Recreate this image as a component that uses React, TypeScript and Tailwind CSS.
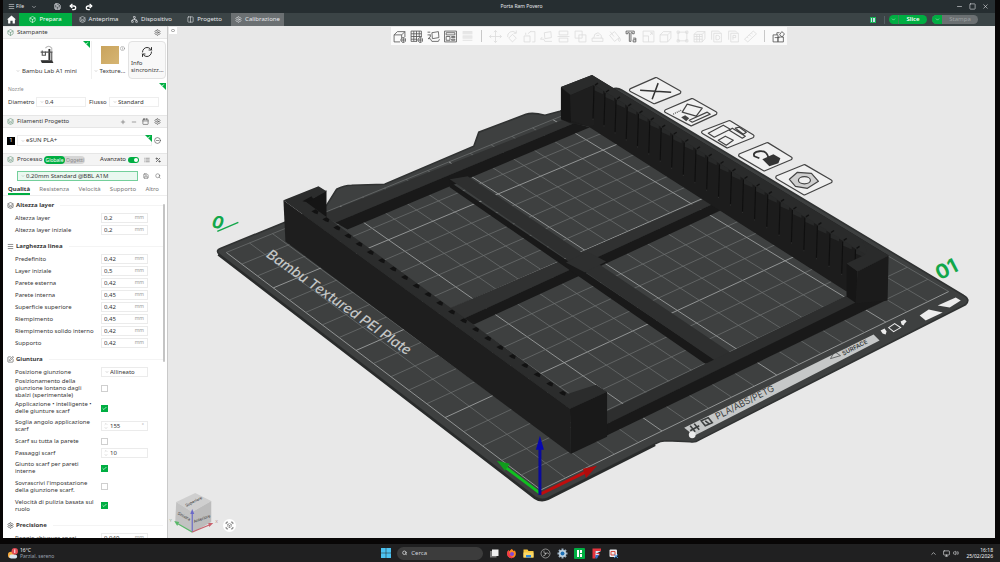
import type { ReactNode } from "react";
import {
  Box,
  Calendar,
  Check,
  ChevronDown,
  ChevronUp,
  CircleMinus,
  Columns2,
  Info,
  Layers,
  List,
  Menu,
  Minus,
  Monitor,
  Network,
  Percent,
  Plus,
  Redo2,
  RefreshCw,
  Save,
  Scan,
  Search,
  Settings,
  SquarePen,
  Square,
  Undo2,
  Volume2,
  X,
} from "lucide-react";

type Point = [number, number];

const tabs = [
  { label: "Prepara", icon: Box, style: "bg-[#00ae42] text-white" },
  { label: "Anteprima", icon: Layers, style: "text-gray-200" },
  { label: "Dispositivo", icon: Network, style: "text-gray-200" },
  { label: "Progetto", icon: Columns2, style: "text-gray-200" },
  { label: "Calibrazione", icon: Settings, style: "bg-[#6b7072] text-gray-200" },
];

// 24x24 outlines for the tools above the plate
const tools = [
  { name: "Aggiungi", on: true, d: "M2 9l6-6h14l-6 6H2v13h11M16 9v6M22 3v10M19 14v9M14.500 18.500h9M19 14a4.500 4.500 0 1 0 .1 0" },
  { name: "Aggiungi piatto", on: true, d: "M2 2h19v11M2 2v19h11M2 7h19M2 12h19M2 17h11M7 2v19M12 2v19M17 2v11M19 14v9M14.500 18.500h9M19 14a4.500 4.500 0 1 0 .1 0" },
  { name: "Orienta", on: true, d: "M9 5l12-2 1 11-12 2zM1 4h5M1 9h6M6 9v4l-4 3M2 16h4l3 5h12l2-4" },
  { name: "Disponi", on: true, d: "M1 2h22v20H1zM4 5h16v4H4zM4 12h7v7H4zM14 12h6v2h-6zM14 17h6v2h-6z" },
  { name: "Layer", on: false, d: "M3 3h18M3 7h18M3 11h18M3 15h18M3 19h18M3 5h18M3 13h18" },
  { name: "Sposta", on: false, d: "M12 1v22M1 12h22M9 4l3-3 3 3M9 20l3 3 3-3M4 9l-3 3 3 3M20 9l3 3-3 3" },
  { name: "Ruota", on: false, d: "M3 13a9 9 0 0 1 15-8M19 1v5h-5M12 8l7 7-7 7-7-7z" },
  { name: "Scala", on: false, d: "M2 11h11v11H2zM13 3h9v19h-5M9 7l6-5M5 5v4" },
  { name: "Faccia", on: false, d: "M8 5l12-2 1 11-12 2zM1 17h6l2 4h13M4 13l-3 4" },
  { name: "Taglia", on: false, d: "M4 2h16v7H4zM4 15h16v7H4zM1 12h22" },
  { name: "Booleana", on: false, d: "M2 2h13v13H2zM9 9h13v13H9z" },
  { name: "Supporti", on: false, d: "M2 21h20v-6H2zM5 15l2-7 6-3 6 5v5M10 10h5" },
  { name: "Colore", on: false, d: "M3 10l9-7 9 11-9 7zM4 3l7 9M21 14c3 4 2 7 0 7s-2-3 0-7" },
  { name: "Testo", on: true, d: "M2 2h15v5h-3V5h-3v16H8V5H5v2H2zM15 15h5v7h-5v-4h5" },
  { name: "Variabile", on: false, d: "M2 2h20v20H2zM2 11h10v11M15 5h4v4M15 9l4-4" },
  { name: "Assembla", on: false, d: "M2 9l6-6h14l-6 6H2v13h14V9M22 3v12l-6 7" },
  { name: "Maglia", on: false, d: "M4 4h16v16H4zM2 2h4v4H2zM18 2h4v4h-4zM2 18h4v4H2zM18 18h4v4h-4z" },
  { name: "Riempi", on: false, d: "M2 8l5-5h15l-5 5H2v14h15V8M22 3v13l-5 6M2 12h15M2 17h15M7 8v14M12 8v14" },
  { name: "Oggetto", on: false, d: "M3 2h13l3 3M3 2v16M7 6h14v16H7zM11 10h3a4 4 0 0 1 0 8h-3z" },
  { name: "Parte", on: false, d: "M3 2h13l3 3M3 2v16M7 6h14v16H7zM11 18v-8h5v4h-5" },
  { name: "Misura", on: false, d: "M1 17L17 2l6 5L7 22zM6 13l2 2M10 9l3 3M14 6l2 2" },
  { name: "Assieme", on: true, d: "M2 9h9v13H2zM11 13h10v9H11zM9 9V5h5M14 9l4-6 5 4-4 6zM5 14h9" },
];

type Setting = {
  label: string;
  height: string;
  kind: "text" | "select" | "check" | "spin";
  value?: string;
  unit?: string;
  checked?: boolean;
};

const sections: { title: string; icon: typeof Box; rows: Setting[] }[] = [
  {
    title: "Altezza layer",
    icon: Layers,
    rows: [
      { label: "Altezza layer", height: "h-3", kind: "text", value: "0,2", unit: "mm" },
      { label: "Altezza layer iniziale", height: "h-3", kind: "text", value: "0,2", unit: "mm" },
    ],
  },
  {
    title: "Larghezza linea",
    icon: Menu,
    rows: [
      { label: "Predefinito", height: "h-3", kind: "text", value: "0,42", unit: "mm" },
      { label: "Layer iniziale", height: "h-3", kind: "text", value: "0,5", unit: "mm" },
      { label: "Parete esterna", height: "h-3", kind: "text", value: "0,42", unit: "mm" },
      { label: "Parete interna", height: "h-3", kind: "text", value: "0,45", unit: "mm" },
      { label: "Superficie superiore", height: "h-3", kind: "text", value: "0,42", unit: "mm" },
      { label: "Riempimento", height: "h-3", kind: "text", value: "0,45", unit: "mm" },
      { label: "Riempimento solido interno", height: "h-3", kind: "text", value: "0,42", unit: "mm" },
      { label: "Supporto", height: "h-3", kind: "text", value: "0,42", unit: "mm" },
    ],
  },
  {
    title: "Giuntura",
    icon: SquarePen,
    rows: [
      { label: "Posizione giunzione", height: "h-3", kind: "select", value: "Allineato" },
      { label: "Posizionamento della giunzione lontano dagli sbalzi (sperimentale)", height: "h-[21px]", kind: "check" },
      { label: "Applicazione • intelligente • delle giunture scarf", height: "h-[18px]", kind: "check", checked: true },
      { label: "Soglia angolo applicazione scarf", height: "h-[18px]", kind: "spin", value: "155", unit: "°" },
      { label: "Scarf su tutta la parete", height: "h-3", kind: "check" },
      { label: "Passaggi scarf", height: "h-3", kind: "spin", value: "10" },
      { label: "Giunto scarf per pareti interne", height: "h-[18px]", kind: "check", checked: true },
      { label: "Sovrascrivi l'impostazione della giunzione scarf.", height: "h-[19px]", kind: "check" },
      { label: "Velocità di pulizia basata sul ruolo", height: "h-[19px]", kind: "check", checked: true },
    ],
  },
  {
    title: "Precisione",
    icon: Settings,
    rows: [{ label: "Raggio chiusura spazi", height: "h-3", kind: "text", value: "0,049", unit: "mm" }],
  },
];

// Maps the unit square onto the four grid corners of the plate
const makeProjection = ([p0, p1, p2, p3]: Point[]) => {
  const [x0, y0] = p0;
  const [x1, y1] = p1;
  const [x2, y2] = p2;
  const [x3, y3] = p3;
  const dx1 = x1 - x2, dx2 = x3 - x2, dx3 = x0 - x1 + x2 - x3;
  const dy1 = y1 - y2, dy2 = y3 - y2, dy3 = y0 - y1 + y2 - y3;
  const den = dx1 * dy2 - dx2 * dy1;
  const g = (dx3 * dy2 - dx2 * dy3) / den;
  const h = (dx1 * dy3 - dx3 * dy1) / den;
  return (u: number, v: number): Point => {
    const w = g * u + h * v + 1;
    return [
      ((x1 - x0 + g * x1) * u + (x3 - x0 + h * x3) * v + x0) / w,
      ((y1 - y0 + g * y1) * u + (y3 - y0 + h * y3) * v + y0) / w,
    ];
  };
};

const project = makeProjection([[541, 490], [948, 292], [613, 96], [227, 253]]);
const CELLS = 18;

const PlateGrid = () => (
  <g>
    {Array.from({ length: CELLS + 1 }, (_, i) => {
      const t = i / CELLS;
      const bold = i % 5 === 0;
      const lines = [
        [project(t, 0), project(t, 1)],
        [project(0, t), project(1, t)],
      ];
      return lines.map(([a, b], k) => (
        <line key={`${i}-${k}`} x1={a[0]} y1={a[1]} x2={b[0]} y2={b[1]} stroke={bold ? "#9b9d9d" : "#707373"} strokeWidth={bold ? 0.9 : 0.7} />
      ));
    })}
  </g>
);

const FRONT_NOTCHES = 22;
const BACK_NOTCHES = 23;

const ease = (i: number, n: number) => {
  const t = i / (n - 1);
  return t * (0.92 + 0.08 * t);
};

const Model = () => (
  <g>
    {/* rear and cross bars */}
    <polygon points="320,216 567,119 574,124 336,223" fill="#303131" />
    <polygon points="336,223 574,124 590,128 348,230" fill="#191919" />
    <polygon points="447,310 713,196 723,200 462,320" fill="#303131" />
    <polygon points="462,320 723,200 723,210 474,325" fill="#191919" />
    <polygon points="449,178 452,184 718,362 705,364 450,188" fill="#191919" />
    <polygon points="450,180 468,177 732,354 718,363" fill="#2e2f2f" />
    <polygon points="566,263 587,252 606,262 585,273" fill="#2e2f2f" />

    {/* slotted rear wall */}
    <polygon points="561,88 592,76 888,256 857,272 846,292 588,127 570,124 561,120" fill="#1c1c1c" />
    <polygon points="561,88 592,76 888,256 868,262 856,250 594,86 571,96" fill="#2a2b2b" />
    <polygon points="570,96 594,86 594,126 588,127 570,121" fill="#1e1e1e" />
    <polygon points="561,89 570,96 571,123 561,120" fill="#151515" />
    {Array.from({ length: BACK_NOTCHES }, (_, i) => {
      const t = ease(i, BACK_NOTCHES);
      const x = 594 + t * 261;
      const y = 87 + t * 163;
      return (
        <g key={i}>
          <polygon points={`${x},${y - 1} ${x + 9},${y + 4} ${x + 9},${y + 8} ${x},${y + 4}`} fill="#282929" />
          <line x1={x + 1} y1={y - 1} x2={x + 4} y2={y - 3} stroke="#121212" strokeWidth="1.4" />
          <line x1={x} y1={y} x2={x - 1} y2={y + 32} stroke="#0f0f0f" strokeWidth="1.1" />
          <circle cx={x - 1} cy={y + 33} r="0.5" fill="#333" />
        </g>
      );
    })}

    {/* front bar */}
    <polygon points="600,415 846,296 857,303 603,426" fill="#2d2e2e" />
    <polygon points="603,426 855,303 887,300 600,439" fill="#191919" />

    {/* right end block */}
    <polygon points="846,264 857,272 856,304 846,297" fill="#161616" />
    <polygon points="857,272 888,256 887,301 855,304" fill="#1b1b1b" />
    <polygon points="846,264 865,255 866,250 862,242 888,256 857,272" fill="#2a2b2b" />

    {/* front wall */}
    <polygon points="306,203 327,191 327,218 312,210" fill="#151515" />
    <polygon points="284,201 319,187 327,192 307,203 568,394 596,385 607,392 570,409" fill="#2b2c2c" />
    <polygon points="284,201 570,409 571,454 286,242" fill="#1e1e1e" />
    <polygon points="570,409 607,392 607,437 571,454" fill="#191919" />
    {Array.from({ length: FRONT_NOTCHES }, (_, i) => {
      const t = ease(i, FRONT_NOTCHES);
      const x = 316 + t * 247;
      const y = 212 + t * 181;
      return <polygon key={i} points={`${x - 4},${y} ${x},${y - 2} ${x + 3},${y} ${x + 2},${y + 3} ${x - 1},${y + 2}`} fill="#121212" />;
    })}
    <polygon points="303,202 312,197 314,200 308,203" fill="#141414" />
  </g>
);

const PlateBadge = ({ points, children }: { points: string; children: ReactNode }) => (
  <g fill="none" stroke="#444" strokeWidth="1.2" strokeLinejoin="round">
    <polygon points={points} fill="#444" strokeWidth="4.400" />
    <polygon points={points} fill="#f0f0f0" stroke="#f0f0f0" strokeWidth="2" />
    {children}
  </g>
);

const Scene = () => (
  <svg viewBox="168 27 827 511" preserveAspectRatio="xMidYMid slice" className="block h-full w-full" fontFamily="Inter, 'Noto Sans', sans-serif">
    {/* build plate */}
    <path
      d="M220 255Q216 251 221 249L327 206L337 190Q345 186 352 186L385 185L474 147L479 133L526 115Q533 113 545 116L560 112L612 90Q617 88 622 91L963 296Q970 300 965 305L699 440Q695 443 690 442L666 441Q660 441 655 444L548 498Q541 501 535 497Z"
      fill="#3e4040"
      stroke="#303232"
      strokeWidth="1.6"
    />
    <path d="M219 255L535 498Q541 502 548 499L655 445" fill="none" stroke="#292b2b" strokeWidth="2.4" />
    <PlateGrid />

    <text transform="translate(266 257) rotate(35)" fontSize="14" fontStyle="italic" fontWeight="500" fill="#c3c5c5">
      Bambu Textured PEI Plate
    </text>

    {/* material strip */}
    <polygon points="684,428 873,335 879,341 694,436" fill="#c6c8c8" />
    <circle cx="692" cy="435" r="3.4" fill="#ececec" />
    <g fill="none" stroke="#3c3f3f" strokeWidth="1.6">
      <path d="M690 426l5 6M694 424l5 6M690 431l9-5" />
      <path d="M701 421l7-3 4 5-7 3zM705 421l4 3" />
      <path d="M830 359l4-7 6 4z" strokeWidth="0.7" />
    </g>
    <text transform="translate(717 420) rotate(-27)" fontSize="9" fill="#3c3f3f">
      PLA/ABS/PETG
    </text>
    <text transform="translate(841 351) rotate(-27)" fontSize="5" fontWeight="600" fill="#3c3f3f">
      HOT
    </text>
    <text transform="translate(843 356) rotate(-27)" fontSize="6" fontWeight="600" fill="#3c3f3f">
      SURFACE
    </text>
    <g fill="#ededed">
      <polygon points="919,316 928,310 942,313 925,321" />
      <polygon points="937,306 955,298 960,301 949,308" />
      <path d="M880 331l4-2 2 3-1 3-3-1zM900 322l4-2 2 2-2 2-1 2-2-1z" />
      <path d="M888 328l6-4 6 4-7 4z" fill="none" stroke="#ededed" strokeWidth="1" />
    </g>

    <text transform="translate(939 281) rotate(-27)" fontSize="20" fontWeight="700" fill="#12a74a">
      01
    </text>
    <text transform="translate(212 228) rotate(8)" fontSize="17" fontStyle="italic" fontWeight="700" fill="#12a74a">
      0
    </text>
    <path d="M218 232L239 223" stroke="#12a74a" strokeWidth="1.4" />

    {/* plate tools */}
    <PlateBadge points="631,91 656,80 679,93 654,103">
      <path d="M640 91L671 93M658 84L652 100" stroke="#333" strokeWidth="1.5" />
    </PlateBadge>
    <PlateBadge points="666,112 692,101 715,114 691,125">
      <path d="M687 105l15 4-6 8-14-4zM689 121l18-8 3 2-18 8z" />
      <path d="M681 118l4-2 4 3-3 3z" fill="#444" stroke="none" />
      <path d="M673 115l8-4" strokeDasharray="1 1" />
    </PlateBadge>
    <PlateBadge points="703,133 729,123 752,137 727,147">
      <path d="M708 134l15-8 7 4-16 8zM718 141l7-4 8 4-7 5zM729 131l3-2 13 8-3 2zM735 129l4-1 7 5-3 2z" />
    </PlateBadge>
    <PlateBadge points="740,156 767,145 790,159 764,170">
      <polygon points="762,160 773,155 780,159 778,164 769,167" fill="#333" stroke="none" />
      <path d="M759 159l-5-2q-2-4 5-5t9 6" stroke="#333" strokeWidth="1.8" />
    </PlateBadge>
    <PlateBadge points="777,178 804,167 830,182 804,194">
      <polygon points="789,180 797,173 811,174 818,182 807,189 795,187" fill="#cfcfcf" />
      <ellipse cx="804" cy="181" rx="6" ry="3.6" fill="#efefef" />
    </PlateBadge>

    <Model />

    {/* origin axes */}
    <g strokeWidth="3">
      <path d="M541 494L505 467" stroke="#10c020" />
      <polygon points="497,461 510,464 505,471" fill="#109c1c" />
      <path d="M541 494L588 471" stroke="#c00d0d" />
      <polygon points="597,466 586,478 583,469" fill="#b00c0c" />
      <path d="M540 495V448" stroke="#0a0a9c" />
      <polygon points="540,436 544,450 536,450" fill="#0707b0" />
    </g>

    {/* view cube */}
    <g>
      <polygon points="177,502 196,493 212,501 193,512" fill="#cfcfcf" />
      <polygon points="177,502 193,512 193,533 176,522" fill="#c2c2c2" />
      <polygon points="193,512 212,501 212,522 193,533" fill="#bcbcbc" />
      <g fill="#333" fontSize="4">
        <text transform="translate(187 507) rotate(-27)">Superiore</text>
        <text transform="translate(178 514) rotate(30)">Sinistra</text>
        <text transform="translate(195 523) rotate(-20)">Anteriore</text>
      </g>
      <path d="M193 532V513" stroke="#6a6ac8" strokeWidth="1.2" />
      <polygon points="193,509 195,514 191,514" fill="#6a6ac8" />
      <path d="M193 532L179 524" stroke="#58b868" strokeWidth="1.2" />
      <polygon points="175,521 180,522 178,526" fill="#58b868" />
      <path d="M193 532L210 525" stroke="#c8606c" strokeWidth="1.2" />
      <polygon points="214,523 210,527 209,523" fill="#c8606c" />
      <text x="170" y="522" fontSize="4" fill="#8aa88a">Y</text>
      <text x="216" y="523" fontSize="4" fill="#b88a8a">X</text>
    </g>
  </svg>
);

const TitleBar = () => (
  <div className="flex h-[13px] items-center bg-[#262e31] text-gray-200">
    <div className="flex w-[90px] items-center pl-[5px]">
      <button className="flex items-center gap-px text-[5px]">
        <Menu className="size-[7px]" />
        File
      </button>
      <ChevronDown className="ml-[7px] size-[6px]" />
      <Save className="ml-[17px] size-[7px]" strokeWidth={3} />
      <Undo2 className="ml-2 size-2 text-white" strokeWidth={4} />
      <Redo2 className="ml-2 size-2 shrink-0 text-white" strokeWidth={4} />
    </div>
    <h1 className="flex-1 text-center text-[5px]">Porta Ram Povero</h1>
    <div className="flex w-[45px] items-center gap-[6px] pl-[6px]">
      <Minus className="size-[7px]" />
      <Square className="size-[7px]" />
      <X className="size-[7px]" />
    </div>
  </div>
);

const TabBar = () => (
  <div className="flex h-[13px] items-center bg-[#3b4446]">
    <button aria-label="Home" className="flex w-4 justify-center">
      <svg viewBox="0 0 16 16" className="size-[9px]" fill="#fff">
        <path d="M8 1L0 8h2v7h4v-5h4v5h4V8h2z" />
      </svg>
    </button>
    {tabs.map(({ label, icon: Icon, style }) => (
      <button key={label} className={`flex h-full w-[53px] items-center justify-center gap-[3px] text-[6px] ${style}`}>
        <Icon className="size-[7px]" />
        {label}
      </button>
    ))}
    <div className="ml-auto flex items-center pr-[17px] text-[6px]">
      <div className="mr-1 flex size-[6px] gap-px bg-[#17b355] p-px">
        <span className="flex-1 bg-[#cde]" />
        <span className="flex-1 border border-[#cde]" />
      </div>
      <span className="mx-1 h-2 w-px bg-[#556063]" />
      <button className="flex h-[9px] w-[38px] items-center overflow-hidden rounded-full bg-[#00ae42] font-semibold text-white">
        <span className="flex h-full w-[10px] items-center justify-center border-r border-[#3b8a58]">
          <ChevronDown className="size-[5px]" />
        </span>
        <span className="flex-1">Slice</span>
      </button>
      <button className="ml-[5px] flex h-[9px] w-[46px] items-center overflow-hidden rounded-full bg-[#6b7072] text-[#9da1a2]">
        <span className="flex h-full w-[10px] items-center justify-center bg-[#00ae42] text-white">
          <ChevronDown className="size-[5px]" />
        </span>
        <span className="flex-1">Stampa</span>
      </button>
    </div>
  </div>
);

const GreenCorner = ({ className }: { className: string }) => (
  <svg viewBox="0 0 6 6" className={`absolute size-[7px] ${className}`}>
    <polygon points="0,0 6,0 6,6" fill="#00ae42" />
    <path d="M2.500 2.500L4.500 1.200" stroke="#fff" strokeWidth="0.6" />
  </svg>
);

const PanelHeader = ({ title, icon: Icon, children }: { title: string; icon: typeof Box; children: ReactNode }) => (
  <header className="flex h-[13px] items-center border-y border-[#e6e6e6] bg-[#f4f4f4] pr-[6px] pl-1">
    <Icon className="mr-[3px] size-[7px] text-[#5d8f73]" />
    <h2 className="text-[6px]">{title}</h2>
    <div className="ml-auto flex items-center gap-[5px] text-[#4a4a4a]">{children}</div>
  </header>
);

const Picker = ({ label, value, className }: { label: string; value: string; className: string }) => (
  <div className={`relative flex items-center border ${className}`}>
    <ChevronDown className="pointer-events-none absolute left-[3px] size-1 text-[#8a8a8a]" />
    <select aria-label={label} className="h-full w-full appearance-none bg-transparent pl-2 text-[6px] outline-none">
      <option>{value}</option>
    </select>
  </div>
);

const PrinterPanel = () => (
  <section>
    <PanelHeader title="Stampante" icon={Box}>
      <Settings className="size-[7px]" />
    </PanelHeader>
    <div className="flex h-[40px] gap-px pt-[2px] pr-px">
      <div className="relative flex flex-1 flex-col items-center justify-between pt-1 pb-1">
        <GreenCorner className="top-0 right-0" />
        <svg viewBox="0 0 20 24" className="h-[19px] w-4" fill="none" stroke="#555" strokeWidth="1.4">
          <path d="M13 5v14" stroke="#333" strokeWidth="2.4" />
          <path d="M16 8v12M2 9h15M4 7v6h4V8" />
          <path d="M3 20h13l1 2H4z" fill="#333" stroke="#333" />
          <path d="M8 4q4-5 8 0v4" stroke="#bbb" />
        </svg>
        <button className="flex items-center gap-[2px] text-[6px] leading-[8px]">
          <ChevronDown className="size-1 text-[#888]" />
          Bambu Lab A1 mini
        </button>
      </div>
      <div className="relative flex w-[36px] flex-col items-center justify-between border-l border-[#f0f0f0] pt-1 pb-1">
        <div className="mt-px size-[18px] bg-linear-to-br from-[#c9a35c] to-[#d6b573]" />
        <Info className="absolute top-[5px] right-[2px] size-[5px] text-[#777]" />
        <button className="flex items-center gap-[2px] text-[6px] leading-[8px]">
          <ChevronDown className="size-1 text-[#888]" />
          Texture...
        </button>
      </div>
      <button className="flex w-[38px] flex-col justify-between rounded-sm border border-[#e2e2e2] bg-[#f8f8f8] px-[2px] pt-1 pb-1 text-left text-[6px] leading-[7px]">
        <RefreshCw className="mx-auto size-3 text-[#333]" />
        <span>Info sincronizz...</span>
      </button>
    </div>
    <div className="relative flex h-[36px] flex-col pt-[5px] pr-[8px] pl-[5px]">
      <GreenCorner className="top-[4px] right-px" />
      <p className="mb-[2px] text-[5px] leading-[11px] text-[#8a8a8a]">Nozzle</p>
      <div className="flex items-center text-[6px]">
        <span className="w-[28px]">Diametro</span>
        <Picker label="Diametro" value="0.4" className="h-[10px] w-[50px] border-[#eeeeee]" />
        <span className="ml-[3px] w-[20px]">Flusso</span>
        <Picker label="Flusso" value="Standard" className="h-[10px] flex-1 border-[#eeeeee]" />
      </div>
    </div>
  </section>
);

const FilamentPanel = () => (
  <section>
    <PanelHeader title="Filamenti Progetto" icon={Layers}>
      <Plus className="size-[6px]" />
      <Minus className="size-[6px]" />
      <Calendar className="size-[7px]" />
      <Settings className="size-[7px]" />
    </PanelHeader>
    <div className="flex h-[25px] items-center pr-[6px] pl-1">
      <span className="flex size-2 items-center justify-center bg-black text-[6px] text-white">1</span>
      <div className="relative mr-[2px] ml-[2px] flex-1">
        <Picker label="Filamento" value="eSUN PLA+" className="h-[11px] border-[#eeeeee]" />
        <GreenCorner className="top-0 right-0" />
      </div>
      <CircleMinus className="size-[7px] text-[#444]" />
    </div>
  </section>
);

const SettingRow = ({ id, row }: { id: string; row: Setting }) => (
  <div className={`flex items-center pl-3 ${row.height}`}>
    <label htmlFor={id} className="w-[86px] shrink-0 pr-1 text-[6px] leading-[7px]">
      {row.label}
    </label>
    {row.kind === "check" && (
      <span className="relative flex size-[7px]">
        <input id={id} type="checkbox" defaultChecked={row.checked} className="size-[7px] appearance-none border border-[#cfcfcf] bg-white checked:border-[#00ae42] checked:bg-[#00ae42]" />
        {row.checked && <Check className="pointer-events-none absolute inset-px size-[5px] text-white" strokeWidth={3} />}
      </span>
    )}
    {row.kind === "select" && (
      <div className="relative flex h-[10px] w-[47px] items-center border border-[#ebebeb]">
        <ChevronDown className="pointer-events-none absolute left-[3px] size-1 text-[#8a8a8a]" />
        <select id={id} className="h-full w-full appearance-none pl-2 text-[6px] outline-none">
          <option>{row.value}</option>
        </select>
      </div>
    )}
    {(row.kind === "text" || row.kind === "spin") && (
      <div className="flex h-[10px] w-[47px] items-center border border-[#ebebeb] pr-[3px] pl-[2px]">
        {row.kind === "spin" && (
          <span className="mr-[2px] flex flex-col text-[#9a9a9a]">
            <ChevronUp className="size-1" />
            <ChevronDown className="size-1" />
          </span>
        )}
        <input id={id} defaultValue={row.value} className="w-0 flex-1 text-[6px] leading-[8px] outline-none" />
        <span className="text-[5px] text-[#9a9a9a]">{row.unit}</span>
      </div>
    )}
  </div>
);

const ProcessPanel = () => (
  <section className="flex min-h-0 flex-1 flex-col">
    <PanelHeader title="Processo" icon={Layers}>
      <label className="flex items-center gap-[2px] text-[6px] text-[#2e2e2e]">
        Avanzato
        <input type="checkbox" defaultChecked className="peer sr-only" />
        <span className="flex h-[6px] w-[11px] justify-end rounded-full bg-[#00ae42] p-px">
          <span className="size-1 rounded-full bg-white" />
        </span>
      </label>
      <List className="size-[6px]" />
      <Percent className="size-[6px]" strokeWidth={3} />
    </PanelHeader>
    <div className="-mt-[10px] ml-[41px] flex h-2 w-[41px] self-start rounded-full bg-[#d5d5d5] text-[5px] leading-[8px]">
      <button className="w-[21px] rounded-full bg-[#00ae42] text-white">Globale</button>
      <button className="flex-1 text-[#888]">Oggetti</button>
    </div>
    <div className="mt-[7px] flex items-center gap-[5px] pr-[6px] pl-[14px]">
      <Picker label="Profilo" value="0.20mm Standard @BBL A1M" className="h-[10px] w-[122px] border-[#74cf9b] bg-[#eaf8f0]" />
      <Save className="size-[6px] text-[#555]" />
      <Search className="ml-px size-[6px] text-[#555]" />
    </div>
    <nav className="flex h-[14px] items-end justify-between pr-2 pl-[5px] text-[6px] leading-[8px] text-[#777]">
      <button className="border-b-2 border-[#00ae42] font-bold text-[#333]">Qualità</button>
      <button className="border-b-2 border-transparent">Resistenza</button>
      <button className="border-b-2 border-transparent">Velocità</button>
      <button className="border-b-2 border-transparent">Supporto</button>
      <button className="border-b-2 border-transparent">Altro</button>
    </nav>
    <div className="flex min-h-0 flex-1 border-t border-[#eeeeee]">
      <div className="flex-1 overflow-y-auto [scrollbar-width:none]">
        {sections.map(({ title, icon: Icon, rows }) => (
          <div key={title} className="pt-1 first:pt-[3px]">
            <h3 className="flex h-[13px] items-center gap-[2px] pl-1 text-[6px] font-bold">
              <Icon className="size-[7px] text-[#444]" />
              {title}
              <span className="ml-1 h-px flex-1 bg-[#f4f4f4]" />
            </h3>
            {rows.map((row, i) => (
              <SettingRow key={row.label} id={`${title}-${i}`} row={row} />
            ))}
          </div>
        ))}
      </div>
      <div className="mt-2 mr-[2px] h-[158px] w-[2px] rounded-full bg-[#c4c4c4]" />
    </div>
  </section>
);

const Viewport = () => (
  <main className="relative min-w-0 flex-1 overflow-hidden bg-[#e8e8e8]">
    <Scene />
    <div className="absolute top-px left-px flex h-[7px] w-2 items-center justify-center bg-white">
      <span className="h-[3px] w-1 rounded-full border border-[#999]" />
    </div>
    <div className="absolute top-px left-[27%] flex h-[18px] items-center gap-1 bg-[#fafafa] px-[2px]">
      {tools.map(({ name, on, d }, i) => (
        <div key={name} className="flex items-center gap-1">
          {(i === 5 || i === 21) && <span className="mx-[3px] h-3 w-px bg-[#c8c8c8]" />}
          <button aria-label={name}>
            <svg viewBox="0 0 24 24" className={on ? "size-[13px] text-[#555]" : "size-[13px] text-[#dcdcdc]"} fill="none" stroke="currentColor" strokeWidth="1.5">
              <path d={d} />
            </svg>
          </button>
        </div>
      ))}
    </div>
    <button aria-label="Vista" className="absolute bottom-[6px] left-[55px] flex size-[13px] items-center justify-center rounded-full bg-white">
      <Scan className="size-[9px] text-[#444]" />
      <Box className="absolute size-[5px] text-[#444]" />
    </button>
  </main>
);

const Taskbar = () => (
  <footer className="flex h-[18px] items-center bg-[#202021] text-gray-100">
    <div className="flex flex-1 items-center gap-[2px] pl-[7px]">
      <svg viewBox="0 0 24 24" className="size-[11px]">
        <circle cx="9" cy="15" r="7" fill="#f5a93b" />
        <rect x="5" y="14" width="17" height="9" rx="4" fill="#d8e4f0" />
        <circle cx="17" cy="7" r="7" fill="#e24b55" />
        <path d="M17 3v8" stroke="#fff" strokeWidth="2" />
      </svg>
      <p className="text-[5px] leading-[6px]">
        16°C
        <br />
        <span className="text-gray-400">Parzial. sereno</span>
      </p>
    </div>
    <div className="flex items-center gap-[6px]">
      <svg viewBox="0 0 20 20" className="size-[10px]" fill="#4cc2f1">
        <path d="M0 0h9.500v9.500H0zM10.500 0H20v9.500h-9.500zM0 10.500h9.500V20H0zM10.500 10.500H20V20h-9.500z" />
      </svg>
      <label className="flex h-[13px] w-[86px] items-center gap-1 rounded-full bg-[#3c3c3c] px-[5px]">
        <Search className="size-[6px]" strokeWidth={3} />
        <input aria-label="Cerca" placeholder="Cerca" className="w-full text-[6px] outline-none placeholder:text-gray-300" />
      </label>
      <svg viewBox="0 0 22 22" className="size-[11px]">
        <rect x="2" y="6" width="13" height="13" fill="#777" />
        <rect x="6" y="3" width="13" height="13" fill="#eee" />
      </svg>
      <svg viewBox="0 0 22 22" className="size-[11px]">
        <path d="M11 2q3 1 4 4l3-1q4 8-1 13-7 5-13-1Q0 10 5 4l1 3z" fill="#ff8a1e" />
        <path d="M5 4q-5 6-1 13 6 6 13 1-6 1-9-4-1-5-3-10z" fill="#f0374b" />
        <circle cx="12" cy="12" r="4" fill="#8347d8" />
      </svg>
      <svg viewBox="0 0 22 22" className="size-[11px]">
        <path d="M1 3h8l2 3h10v13H1z" fill="#f8c63d" />
        <path d="M1 9h20v10H1z" fill="#fbd968" />
        <path d="M6 14h10v5H6z" fill="#2f86d8" />
      </svg>
      <svg viewBox="0 0 22 22" className="size-[11px]" fill="none" stroke="#cfcfcf" strokeWidth="1.2">
        <circle cx="11" cy="11" r="9" fill="#222" />
        <path d="M11 11q-5-1-3-6M11 11q4-3 7 1M11 11q0 5-5 5" />
        <circle cx="11" cy="11" r="1" />
      </svg>
      <svg viewBox="0 0 22 22" className="size-[11px]">
        <path d="M11 1v20M1 11h20M4 4l14 14M18 4L4 18" stroke="#9fb4c6" strokeWidth="4" />
        <circle cx="11" cy="11" r="7" fill="#c2d3e0" />
        <circle cx="11" cy="11" r="4" fill="#1c6fb5" />
      </svg>
      <svg viewBox="0 0 22 22" className="size-[11px]">
        <rect width="22" height="22" rx="2" fill="#00ae42" />
        <path d="M6 4h4v14H6zM12 4h4v6h-4zM12 12h4v6h-4z" fill="#fff" />
      </svg>
      <svg viewBox="0 0 22 22" className="size-[11px]">
        <path d="M3 1h17v5H9v4h8v5H9v6H3z" fill="#e8343f" />
        <path d="M9 6h11L9 12zM9 12h8l-8 6z" fill="#dfe8f6" />
        <path d="M9 14h7l-4 7H9z" fill="#3a6fc4" />
      </svg>
      <svg viewBox="0 0 22 22" className="size-[11px]">
        <rect x="3" y="3" width="15" height="15" rx="2" fill="#e9edf2" />
        <path d="M6 7h8v7H6z" fill="none" stroke="#d94c3f" strokeWidth="2" />
        <path d="M12 13l8 7M20 13l-8 7" stroke="#3b8fdc" strokeWidth="2" />
      </svg>
    </div>
    <div className="flex flex-1 items-center justify-end gap-[3px] pr-[7px]">
      <ChevronUp className="mr-[3px] size-[7px]" />
      <Monitor className="size-[7px]" />
      <Volume2 className="size-[6px]" />
      <p className="ml-1 text-right text-[5px] leading-[6px]">
        16:18
        <br />
        25/02/2026
      </p>
    </div>
  </footer>
);

const App = () => {
  return (
    <div className="flex h-screen flex-col bg-[#080606] font-['Noto_Sans',sans-serif] text-[#363636]">
      <div className="mr-[5px] mb-[6px] ml-[3px] flex min-h-0 flex-1 flex-col">
        <TitleBar />
        <TabBar />
        <div className="flex min-h-0 flex-1">
          <aside className="flex w-[165px] shrink-0 flex-col overflow-hidden border-r border-[#c9c9c9] bg-white">
            <PrinterPanel />
            <FilamentPanel />
            <ProcessPanel />
          </aside>
          <Viewport />
        </div>
      </div>
      <Taskbar />
    </div>
  );
};

export default App;
